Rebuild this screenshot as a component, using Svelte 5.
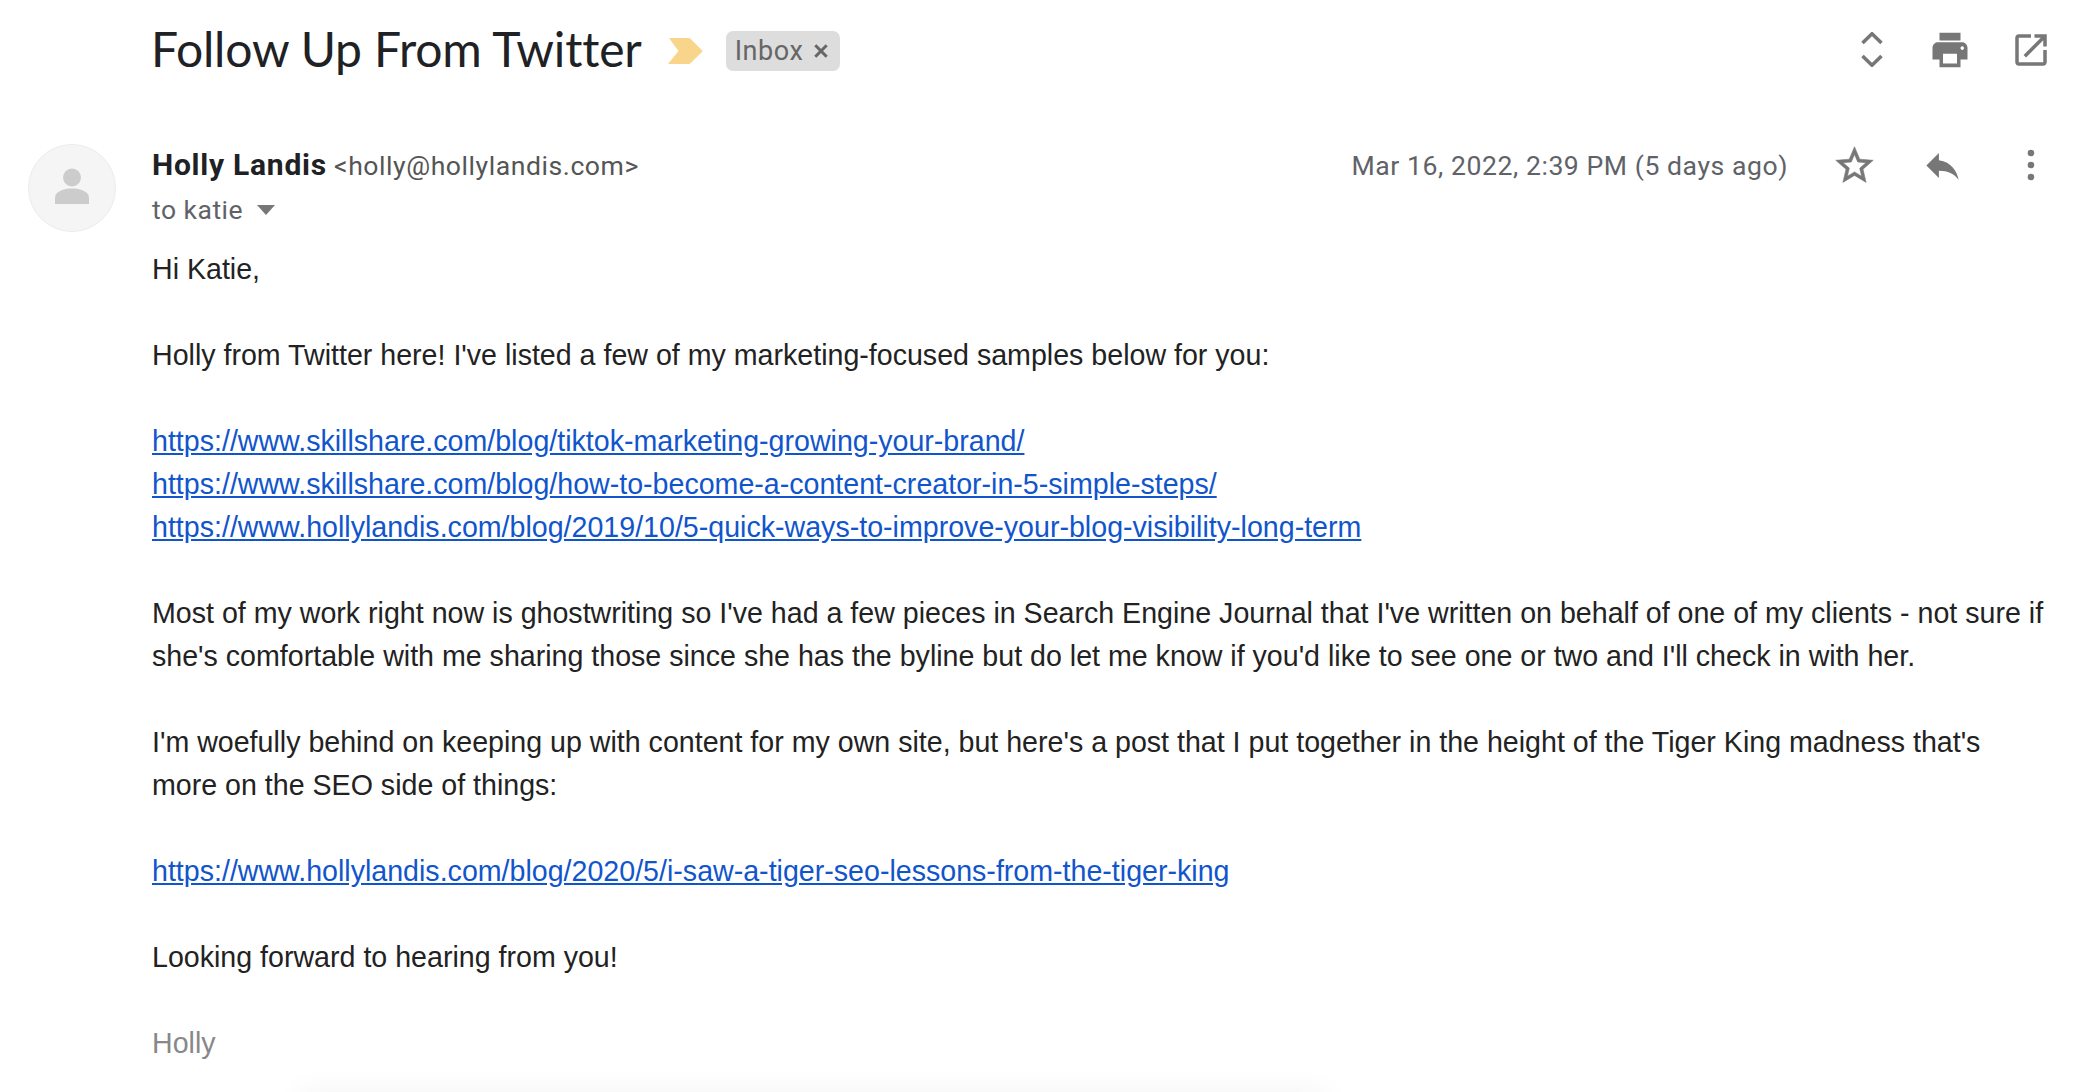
<script lang="ts">
  const links = {
    tiktok: 'https://www.skillshare.com/blog/tiktok-marketing-growing-your-brand/',
    creator: 'https://www.skillshare.com/blog/how-to-become-a-content-creator-in-5-simple-steps/',
    visibility: 'https://www.hollylandis.com/blog/2019/10/5-quick-ways-to-improve-your-blog-visibility-long-term',
    tiger: 'https://www.hollylandis.com/blog/2020/5/i-saw-a-tiger-seo-lessons-from-the-tiger-king'
  }
</script>

<div class="mail">
  <header class="subject-row">
    <h1 class="subject">Follow Up From Twitter</h1>
    <svg class="tag-mark" viewBox="0 0 35 26"><path d="M1 0H20.500Q22 0 23 1.300L34 12.200Q35 13 34 14L23 24.700Q22 26 20.500 26H0L10.500 13Z" /></svg>
    <span class="chip">Inbox
      <svg class="chip-x" viewBox="0 0 14 14"><path d="M2 2L12 12M12 2L2 12" /></svg>
    </span>
    <div class="subject-tools">
      <svg class="tool-chevrons" viewBox="0 0 22 35"><path d="M1.500 11L11 1.800L20.500 11M1.500 24L11 33.200L20.500 24" /></svg>
      <svg class="tool-print" viewBox="0 0 24 24" preserveAspectRatio="none"><path d="M19 8H5c-1.660 0-3 1.340-3 3v6h4v4h12v-4h4v-6c0-1.660-1.340-3-3-3zm-3 11H8v-5h8v5zm3-7c-.550 0-1-.450-1-1s.450-1 1-1 1 .450 1 1-.450 1-1 1zm-1-9H6v4h12V3z" /></svg>
      <svg class="tool-open" viewBox="0 0 24 24"><path d="M19 19H5V5h7V3H5c-1.110 0-2 .900-2 2v14c0 1.100.890 2 2 2h14c1.100 0 2-.900 2-2v-7h-2v7zM14 3v2h3.590l-9.830 9.830 1.410 1.410L19 6.410V10h2V3h-7z" /></svg>
    </div>
  </header>

  <section class="message">
    <div class="avatar">
      <svg viewBox="0 0 34 40"><circle cx="17" cy="9.500" r="9" /><path d="M0 36V30C0 23 9 20.500 17 20.500S34 23 34 30V36Z" /></svg>
    </div>

    <div class="content">
      <div class="meta">
        <div class="from">
          <div class="sender"><strong>Holly Landis</strong> <span class="address">&lt;holly@hollylandis.com&gt;</span></div>
          <div class="to">to katie <span class="caret"></span></div>
        </div>
        <div class="meta-right">
          <span class="date">Mar 16, 2022, 2:39 PM (5 days ago)</span>
          <svg class="tool-star" viewBox="0 0 24 24"><path d="M22 9.240l-7.190-.620L12 2 9.190 8.630 2 9.240l5.460 4.730L5.820 21 12 17.270 18.180 21l-1.630-7.030L22 9.240zM12 15.400l-3.760 2.270 1-4.280-3.320-2.880 4.380-.380L12 6.100l1.710 4.040 4.380.380-3.320 2.880 1 4.280L12 15.400z" /></svg>
          <svg class="tool-reply" viewBox="0 0 24 24"><path d="M10 9V5l-7 7 7 7v-4.100c5 0 8.500 1.600 11 5.100-1-5-4-10-11-11z" /></svg>
          <svg class="tool-more" viewBox="0 0 12 36"><circle cx="6" cy="6" r="3.300" /><circle cx="6" cy="18" r="3.300" /><circle cx="6" cy="30" r="3.300" /></svg>
        </div>
      </div>

      <div class="body">
        <p>Hi Katie,</p>
        <p>Holly from Twitter here! I've listed a few of my marketing-focused samples below for you:</p>
        <p>
          <a href={links.tiktok}>{links.tiktok}</a><br />
          <a href={links.creator}>{links.creator}</a><br />
          <a href={links.visibility}>{links.visibility}</a>
        </p>
        <p>Most of my work right now is ghostwriting so I've had a few pieces in Search Engine Journal that I've written on behalf of one of my clients - not sure if she's comfortable with me sharing those since she has the byline but do let me know if you'd like to see one or two and I'll check in with her.</p>
        <p>I'm woefully behind on keeping up with content for my own site, but here's a post that I put together in the height of the Tiger King madness that's more on the SEO side of things:</p>
        <p><a href={links.tiger}>{links.tiger}</a></p>
        <p>Looking forward to hearing from you!</p>
        <p class="signature">Holly</p>
      </div>
    </div>
  </section>

  <div class="fade"></div>
</div>

<style>
  :global(body) {
    margin: 0;
    background: #fff;
  }

  .mail {
    position: relative;
    width: 2086px;
    height: 1092px;
    overflow: hidden;
    background: #fff;
    font-family: "Liberation Sans", Arial, sans-serif;
    color: #222;
  }

  svg {
    display: block;
    flex-shrink: 0;
    fill: #777;
  }

  .subject-row {
    display: flex;
    align-items: center;
    height: 40px;
    padding: 31px 34px 0 151px;
  }

  .subject {
    position: relative;
    top: -2px;
    margin: 0;
    font-family: Lato, sans-serif;
    font-size: 48px;
    font-weight: 400;
    line-height: 40px;
    letter-spacing: -0.16px;
    color: #202124;
  }

  .tag-mark {
    width: 35px;
    height: 26px;
    margin-left: 26px;
    fill: #f8d58a;
  }

  .chip {
    display: flex;
    align-items: center;
    gap: 9px;
    height: 40px;
    margin-left: 23px;
    padding: 0 11px 0 9px;
    border-radius: 7px;
    background: #ddd;
    color: #666;
    font-family: Roboto, sans-serif;
    font-size: 27px;
    letter-spacing: 0.6px;
  }

  .chip-x {
    width: 16px;
    height: 16px;
    fill: none;
    stroke: #666;
    stroke-width: 2.6;
  }

  .subject-tools {
    display: flex;
    align-items: center;
    gap: 46px;
    margin-left: auto;
    margin-bottom: 3px;
  }

  .tool-chevrons {
    width: 22px;
    height: 35px;
    fill: none;
    stroke: #777;
    stroke-width: 3.600;
  }

  .tool-print {
    width: 42px;
    height: 46px;
  }

  .tool-open {
    width: 42px;
    height: 42px;
    margin-left: -7px;
  }

  .message {
    display: flex;
    margin-top: 73px;
    padding-left: 28px;
    padding-right: 36px;
  }

  .avatar {
    display: flex;
    align-items: center;
    justify-content: center;
    flex-shrink: 0;
    box-sizing: border-box;
    width: 88px;
    height: 88px;
    border: 1px solid #ececec;
    border-radius: 50%;
    background: #f5f5f5;
  }

  .avatar svg {
    width: 34px;
    height: 40px;
    fill: #ccc;
  }

  .content {
    flex: 1;
    min-width: 0;
    margin-left: 36px;
  }

  .meta {
    display: flex;
    justify-content: space-between;
    align-items: flex-start;
    margin-top: 4px;
    margin-right: 13px;
  }

  .sender {
    font-family: Roboto, sans-serif;
    font-size: 26.600px;
    line-height: 34px;
    color: #555;
    letter-spacing: 0.55px;
  }

  .sender strong {
    font-size: 30px;
    font-weight: 700;
    color: #202124;
    letter-spacing: 0.75px;
  }

  .to {
    display: flex;
    align-items: center;
    gap: 14px;
    margin-top: 10px;
    font-family: Roboto, sans-serif;
    font-size: 26.500px;
    line-height: 34px;
    letter-spacing: 0.5px;
    color: #5f6368;
  }

  .caret {
    width: 0;
    height: 0;
    border-left: 9px solid transparent;
    border-right: 9px solid transparent;
    border-top: 10px solid #777;
  }

  .meta-right {
    display: flex;
    align-items: center;
    height: 34px;
  }

  .date {
    font-family: Roboto, sans-serif;
    font-size: 26.600px;
    letter-spacing: 0.55px;
    color: #5f6368;
  }

  .tool-star {
    width: 45px;
    height: 45px;
    margin-left: 44px;
    stroke: #777;
    stroke-width: 0.3;
  }

  .tool-reply {
    width: 43px;
    height: 43px;
    margin-left: 44px;
  }

  .tool-more {
    width: 12px;
    height: 36px;
    margin-left: 61px;
  }

  .body {
    margin-top: 21px;
    font-size: 28.600px;
    line-height: 43px;
    color: #222;
  }

  .body p {
    margin: 0 0 43px;
  }

  .body a {
    color: #15c;
  }

  .signature {
    color: #888;
  }

  /* faint shadow bleeding in from the next card */
  .fade {
    position: absolute;
    left: 300px;
    right: 760px;
    bottom: -30px;
    height: 30px;
    box-shadow: 0 0 30px rgba(0, 0, 0, 0.05);
  }
</style>
